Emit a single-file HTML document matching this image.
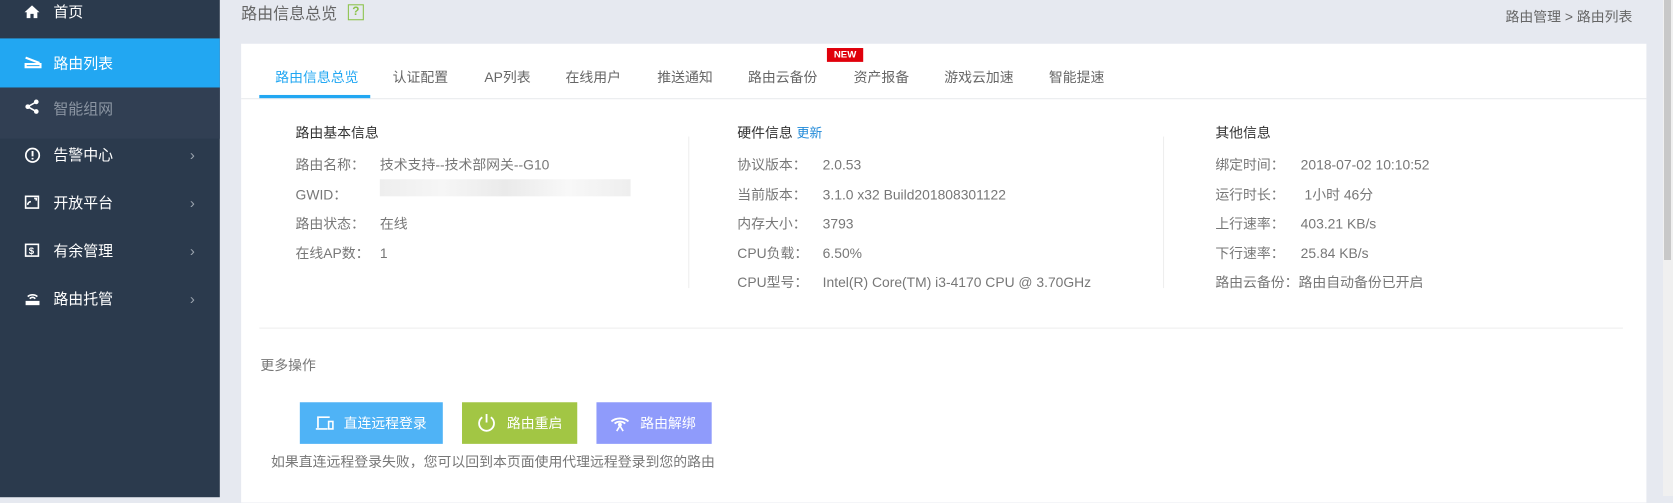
<!DOCTYPE html>
<html><head><meta charset="utf-8"><style>
*{margin:0;padding:0;box-sizing:border-box}
body{width:1673px;height:496px;overflow:hidden;background:#e6e9f0;font-family:"Liberation Sans","Noto Sans CJK SC",sans-serif;font-size:13px;position:relative}
#w{position:absolute;left:0;top:0;width:1568px;height:466px;transform:scale(1.067);transform-origin:0 0}
.side{position:absolute;left:0;top:0;width:206px;height:466px;background:#2b3a4d}
.it{position:absolute;left:0;width:206px;height:45px;color:#fff;font-size:14px;line-height:45px;padding-left:50px;white-space:nowrap}
.it svg{position:absolute;left:23px;top:15px}
.arr{position:absolute;left:178px;top:0;color:#9aa3ae;font-size:14px}
.ab{position:absolute;white-space:nowrap}
.g{color:#777}
.d{color:#333}
.tab{position:absolute;top:62px;font-size:13px;color:#666;white-space:nowrap}
.btn{position:absolute;top:377px;height:39px;color:#fff;font-size:13px;line-height:39px}
</style></head><body>
<div id="w">
<div class="side">
 <div class="it" style="top:-11px"><svg width="14" height="14" viewBox="0 0 14 14"><path d="M7 1L0 7.5h2V13h3.5V9h3v4H12V7.5h2z" fill="#fff"/></svg>首页</div>
 <div class="it" style="top:36px;height:46px;background:#22a7f2;line-height:46px"><svg width="16" height="14" viewBox="0 0 16 14"><path d="M1 3L14 8M1 9h14v3H1z" stroke="#fff" stroke-width="2" fill="none"/></svg>路由列表</div>
 <div class="it" style="top:82px;height:48px;background:#313f53;color:#8c96a3;line-height:40px"><svg width="14" height="14" viewBox="0 0 14 14" style="top:11px"><circle cx="11" cy="2.5" r="2.2" fill="#fff"/><circle cx="3" cy="7" r="2.2" fill="#fff"/><circle cx="11" cy="11.5" r="2.2" fill="#fff"/><path d="M11 2.5L3 7l8 4.5" stroke="#fff" stroke-width="1.5" fill="none"/></svg>智能组网</div>
 <div class="it" style="top:123px"><svg width="15" height="15" viewBox="0 0 15 15"><circle cx="7.5" cy="7.5" r="6.3" stroke="#fff" stroke-width="1.6" fill="none"/><path d="M7.5 3.5v5M7.5 10v1.5" stroke="#fff" stroke-width="1.8"/></svg>告警中心<span class="arr">›</span></div>
 <div class="it" style="top:168px"><svg width="14" height="13" viewBox="0 0 14 13"><rect x="1" y="1" width="12" height="11" stroke="#fff" stroke-width="1.5" fill="none"/><path d="M3 9a3 3 0 0 1 3-3M9 3h2v2" stroke="#fff" stroke-width="1.5" fill="none"/></svg>开放平台<span class="arr">›</span></div>
 <div class="it" style="top:213px"><svg width="14" height="13" viewBox="0 0 14 13"><rect x="1" y="1" width="12" height="11" stroke="#fff" stroke-width="1.5" fill="none"/><text x="4" y="10" fill="#fff" font-size="9" font-weight="bold">$</text></svg>有余管理<span class="arr">›</span></div>
 <div class="it" style="top:258px"><svg width="15" height="14" viewBox="0 0 15 14"><path d="M3 5a6 5 0 0 1 9 0M5 7a3 3 0 0 1 5 0" stroke="#fff" stroke-width="1.5" fill="none"/><rect x="1" y="9" width="13" height="4" fill="#fff"/></svg>路由托管<span class="arr">›</span></div>
</div>
<div class="ab" style="left:226px;top:2px;font-size:15px;color:#666">路由信息总览</div>
<div class="ab" style="left:326px;top:4px;width:15px;height:15px;border:1.5px solid #8bc34a;color:#8bc34a;font-size:11px;line-height:12px;text-align:center;font-weight:bold">?</div>
<div class="ab" style="left:1411px;top:5px;color:#666">路由管理 &gt; 路由列表</div>
<div class="ab" style="left:226px;top:41px;width:1317px;height:430px;background:#fff"></div>
<div class="ab" style="left:226px;top:92px;width:1317px;height:1px;background:#e8eaee"></div>
<div class="ab" style="left:243px;top:89px;width:104px;height:3px;background:#22a7f2"></div>
<div class="tab" style="left:258px;color:#22a7f2">路由信息总览</div>
<div class="tab" style="left:368px">认证配置</div>
<div class="tab" style="left:454px">AP列表</div>
<div class="tab" style="left:530px">在线用户</div>
<div class="tab" style="left:616px">推送通知</div>
<div class="tab" style="left:701px">路由云备份</div>
<div class="tab" style="left:800px">资产报备</div>
<div class="tab" style="left:885px">游戏云加速</div>
<div class="tab" style="left:983px">智能提速</div>
<div class="ab" style="left:775px;top:45px;width:34px;height:13px;background:#e0000b;color:#fff;font-size:9px;font-weight:bold;text-align:center;line-height:13px">NEW</div>
<div class="ab" style="left:645px;top:128px;width:1px;height:142px;background:#eee"></div>
<div class="ab" style="left:1090px;top:128px;width:1px;height:142px;background:#eee"></div>
<div class="ab d" style="left:277px;top:114px">路由基本信息</div>
<div class="ab g" style="left:277px;top:141px;line-height:27.5px">路由名称：<br>GWID：<br>路由状态：<br>在线AP数：</div>
<div class="ab g" style="left:356px;top:141px;line-height:27.5px">技术支持--技术部网关--G10<br>&nbsp;<br>在线<br>1</div>
<div class="ab" style="left:356px;top:168px;width:235px;height:16px;background:linear-gradient(90deg,#eee,#f6f6f6,#eaeaea,#f8f8f8,#eee)"></div>
<div class="ab d" style="left:691px;top:114px">硬件信息 <span style="color:#1e88d8;font-size:12px">更新</span></div>
<div class="ab g" style="left:691px;top:141px;line-height:27.5px">协议版本：<br>当前版本：<br>内存大小：<br>CPU负载：<br>CPU型号：</div>
<div class="ab g" style="left:771px;top:141px;line-height:27.5px">2.0.53<br>3.1.0 x32 Build201808301122<br>3793<br>6.50%<br>Intel(R) Core(TM) i3-4170 CPU @ 3.70GHz</div>
<div class="ab d" style="left:1139px;top:114px">其他信息</div>
<div class="ab g" style="left:1139px;top:141px;line-height:27.5px">绑定时间：<br>运行时长：<br>上行速率：<br>下行速率：<br>路由云备份：路由自动备份已开启</div>
<div class="ab g" style="left:1219px;top:141px;line-height:27.5px">2018-07-02 10:10:52<br>&nbsp;1小时 46分<br>403.21 KB/s<br>25.84 KB/s</div>
<div class="ab" style="left:243px;top:307px;width:1278px;height:1px;background:#eee"></div>
<div class="ab g" style="left:244px;top:332px">更多操作</div>
<div class="btn" style="left:281px;width:134px;background:#4fb3f6"><svg class="ab" style="left:14px;top:12px" width="18" height="15" viewBox="0 0 18 15"><path d="M3 12V2h11M1 13h11" stroke="#fff" stroke-width="1.6" fill="none"/><rect x="13" y="6" width="4" height="7" stroke="#fff" stroke-width="1.5" fill="none"/></svg><span class="ab" style="left:41px">直连远程登录</span></div>
<div class="btn" style="left:433px;width:108px;background:#a2c644"><svg class="ab" style="left:14px;top:10px" width="18" height="18" viewBox="0 0 18 18"><path d="M5 4a7 7 0 1 0 8 0M9 1v8" stroke="#fff" stroke-width="1.7" fill="none"/></svg><span class="ab" style="left:42px">路由重启</span></div>
<div class="btn" style="left:559px;width:108px;background:#8f9bfb"><svg class="ab" style="left:12px;top:11px" width="20" height="17" viewBox="0 0 20 17"><path d="M2 7a11 9 0 0 1 16 0M5 9a7 6 0 0 1 10 0" stroke="#fff" stroke-width="1.7" fill="none"/><circle cx="10" cy="10" r="1.8" fill="#fff"/><path d="M10 11l-3 5M10 11l3 5" stroke="#fff" stroke-width="1.5"/></svg><span class="ab" style="left:41px">路由解绑</span></div>
<div class="ab g" style="left:254px;top:422px">如果直连远程登录失败，您可以回到本页面使用代理远程登录到您的路由</div>
</div>
<div class="ab" style="left:1663px;top:0;width:10px;height:496px;background:#f0f0f0"></div>
<div class="ab" style="left:1664px;top:0;width:7px;height:260px;background:#c8c8c8"></div>
</body></html>
